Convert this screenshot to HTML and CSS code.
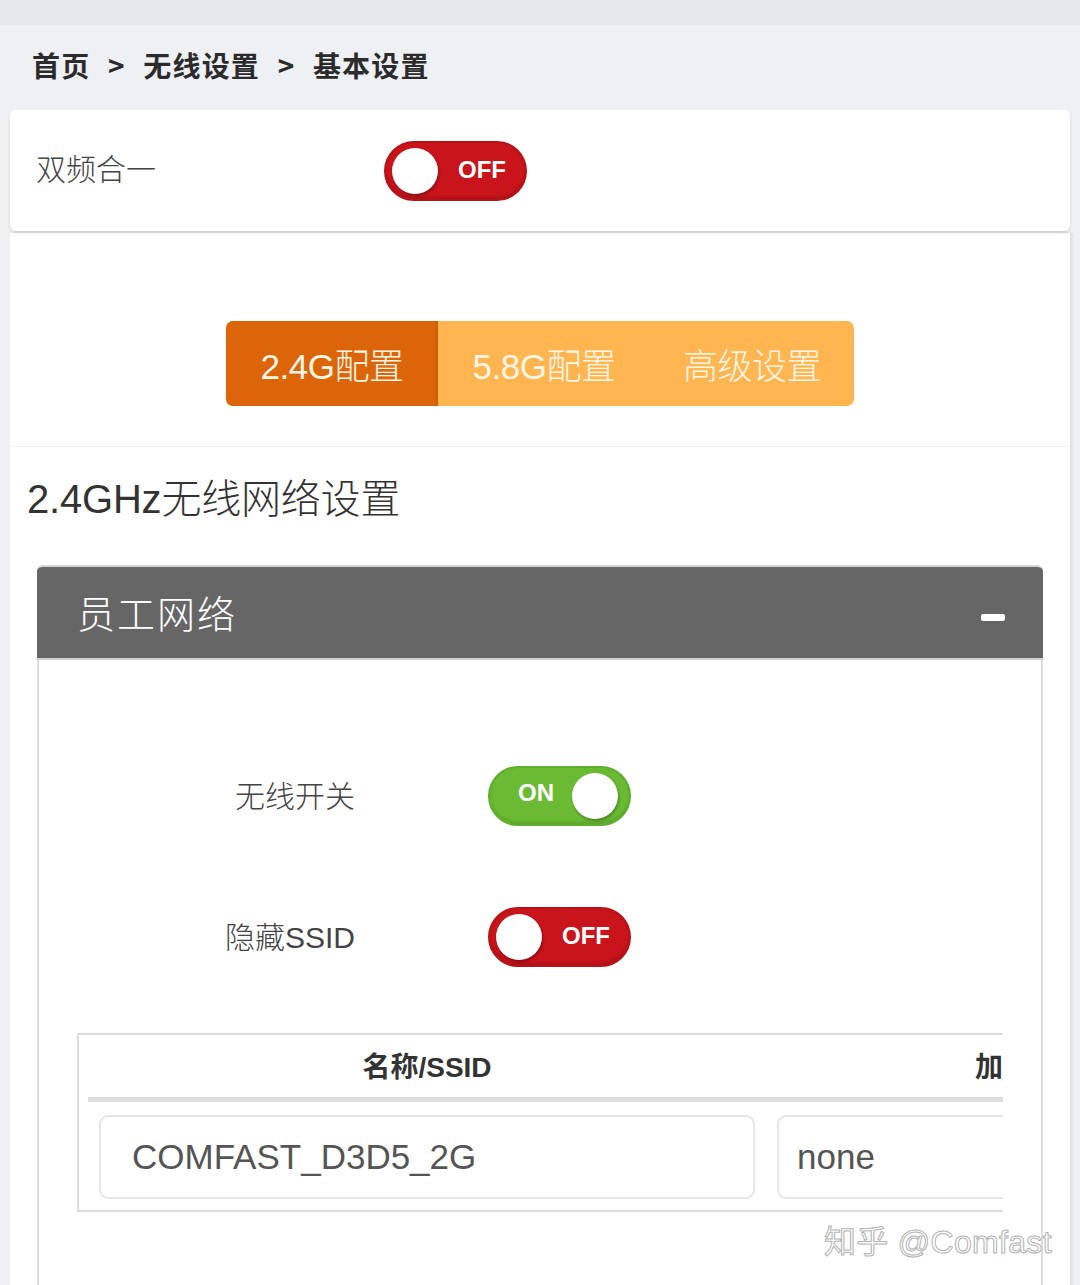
FILE: index.html
```html
<!DOCTYPE html>
<html lang="zh">
<head>
<meta charset="utf-8">
<title>基本设置</title>
<link rel="stylesheet" href="styles.css">
</head>
<body>
<div class="topbar"></div>
<div class="breadcrumb">首页 <span class="sep">&gt;</span> 无线设置 <span class="sep">&gt;</span> 基本设置</div>

<div class="card">
  <div class="card-label">双频合一</div>
  <div class="toggle off"><span class="knob"></span><span class="toggle-text">OFF</span></div>
</div>

<div class="main">
  <div class="tabs-area">
    <div class="tabs">
      <div class="tab active">2.4G配置</div>
      <div class="tab">5.8G配置</div>
      <div class="tab">高级设置</div>
    </div>
  </div>

  <h2 class="section-title">2.4GHz无线网络设置</h2>

  <div class="panel">
    <div class="panel-head">
      <span class="panel-title">员工网络</span>
      <span class="minus"></span>
    </div>
    <div class="panel-body">
      <div class="row">
        <div class="row-label">无线开关</div>
        <div class="toggle on"><span class="toggle-text">ON</span><span class="knob"></span></div>
      </div>
      <div class="row">
        <div class="row-label">隐藏SSID</div>
        <div class="toggle off"><span class="knob"></span><span class="toggle-text">OFF</span></div>
      </div>
      <div class="table-wrap">
        <div class="table">
          <div class="thead">
            <div class="th col1">名称/SSID</div>
            <div class="th col2">加</div>
          </div>
          <div class="tbody">
            <div class="td col1"><div class="input">COMFAST_D3D5_2G</div></div>
            <div class="td col2"><div class="input">none</div></div>
          </div>
        </div>
      </div>
    </div>
  </div>
</div>

<div class="watermark">知乎 @Comfast</div>
</body>
</html>
```

FILE: styles.css
```css
* { box-sizing: border-box; }
html, body { margin: 0; padding: 0; }
body {
  background: #eef0f4;
  font-family: "Noto Sans CJK SC", "Noto Sans", sans-serif;
  color: #333;
  width: 1080px;
  height: 1285px;
  overflow: hidden;
  position: relative;
}
.topbar { height: 25px; background: #e6e8ec; }
.breadcrumb {
  height: 85px;
  padding-left: 32px;
  padding-top: 20px;
  font-size: 28px;
  font-weight: 700;
  color: #2b2b2b;
  letter-spacing: 1.2px;
}
.breadcrumb .sep { margin: 0 10px; font-weight: 700; }

.card {
  margin: 0 10px;
  height: 121px;
  background: #fff;
  border-radius: 6px;
  box-shadow: 0 2px 3px rgba(0,0,0,0.12);
  display: flex;
  align-items: center;
  padding-left: 26px;
  position: relative;
  z-index: 1;
}
.card-label {
  width: 348px;
  font-size: 30px;
  font-weight: 300;
  color: #444;
  margin-top: -8px;
}

.toggle {
  width: 143px;
  height: 60px;
  border-radius: 30px;
  display: flex;
  align-items: center;
  padding: 0 6px;
  font-family: "Liberation Sans", Arial, sans-serif;
  font-weight: 700;
  font-size: 24px;
  color: #fff;
}
.toggle.off {
  background: #c9141c;
  border: 2px solid #b81219;
  box-shadow: inset 0 -2px 3px rgba(0,0,0,0.15);
}
.toggle.on {
  background: #6abb33;
  border: 2px solid #5fae2c;
  box-shadow: inset 0 -2px 3px rgba(0,0,0,0.12);
}
.knob {
  width: 46px;
  height: 46px;
  border-radius: 50%;
  background: #fff;
  box-shadow: 1px 2px 3px rgba(0,0,0,0.3);
  flex: none;
}
.toggle.off .toggle-text { margin-left: 20px; margin-top: -2px; }
.toggle.on .toggle-text { margin-left: 22px; margin-right: 18px; margin-top: -6px; }

.main {
  margin: 2px 10px 0;
  background: #fff;
  box-shadow: 2px 0 3px rgba(0,0,0,0.08);
  height: 1060px;
  overflow: hidden;
}
.tabs-area {
  height: 214px;
  border-bottom: 1px solid #f1f1f1;
  display: flex;
  justify-content: center;
  padding-top: 88px;
}
.tabs {
  display: flex;
  width: 628px;
  height: 85px;
  border-radius: 7px;
  overflow: hidden;
  background: #ffb550;
}
.tab {
  flex: none;
  width: 212px;
  display: flex;
  align-items: center;
  justify-content: center;
  font-size: 35px;
  font-weight: 300;
  color: #fff6e6;
  font-family: "Liberation Sans", "Noto Sans CJK SC", sans-serif;
  letter-spacing: -0.5px;
}
.tab.active { background: #dc6409; box-shadow: inset -2px 0 2px rgba(0,0,0,0.08); }
.tab:nth-child(3) { width: 204px; }

.section-title {
  margin: 0;
  padding: 20px 0 0 17px;
  height: 118px;
  font-size: 40px;
  font-weight: 300;
  color: #333;
  font-family: "Liberation Sans", "Noto Sans CJK SC", sans-serif;
  letter-spacing: -0.2px;
}

.panel {
  margin: 0 27px;
  border: 2px solid #dcdcdc;
  border-top: none;
  border-radius: 6px 6px 0 0;
  height: 760px;
}
.panel-head {
  height: 95px;
  background: #666;
  border-radius: 6px 6px 0 0;
  display: flex;
  align-items: center;
  justify-content: space-between;
  padding: 0 38px 0 40px;
  margin: 0 -2px;
  border-top: 2px solid #d6d6d6;
  border-bottom: 2px solid #d0d0d0;
}
.panel-title {
  font-size: 38px;
  font-weight: 300;
  color: #fff;
  letter-spacing: 2px;
  margin-top: -2px;
}
.minus {
  width: 24px;
  height: 7px;
  background: #fff;
  border-radius: 2px;
  margin-top: 10px;
}
.panel-body { padding-top: 106px; }
.row {
  display: flex;
  align-items: center;
  height: 60px;
  margin-bottom: 81px;
}
.row + .row { margin-bottom: 66px; }
.row-label {
  width: 316px;
  text-align: right;
  font-size: 30px;
  font-weight: 300;
  color: #444;
  margin-right: 133px;
  margin-top: -4px;
  font-family: "Liberation Sans", "Noto Sans CJK SC", sans-serif;
}

.table-wrap {
  margin: 0 38px;
  border: 2px solid #dcdcdc;
  border-right: none;
  height: 179px;
  overflow: hidden;
  padding-left: 9px;
}
.table { width: 1100px; }
.thead {
  display: flex;
  height: 67px;
  border-bottom: 5px solid #dddddd;
}
.th {
  display: flex;
  align-items: center;
  justify-content: center;
  font-size: 28px;
  font-weight: 700;
  color: #333;
  padding-bottom: 2px;
  font-family: "Liberation Sans", "Noto Sans CJK SC", sans-serif;
}
.col1 { width: 678px; }
.col2 { width: 420px; }
.th.col2 { justify-content: flex-start; padding-left: 209px; }
.tbody { display: flex; padding-top: 13px; }
.td { padding: 0 11px; }
.input {
  height: 84px;
  border: 2px solid #e6e6e6;
  border-radius: 9px;
  display: flex;
  align-items: center;
  padding-left: 31px;
  font-family: "Liberation Sans", sans-serif;
  font-size: 35px;
  color: #555;
  letter-spacing: 0;
}
.td.col2 .input { padding-left: 18px; }

.watermark {
  position: absolute;
  left: 824px;
  top: 1216px;
  font-size: 32px;
  color: #fff;
  font-family: "Liberation Sans", "Noto Sans CJK SC", sans-serif;
  letter-spacing: 0.3px;
  -webkit-text-stroke: 1px #b5b5b5;
  text-shadow: 0 0 1px rgba(0,0,0,0.2);
}
```
